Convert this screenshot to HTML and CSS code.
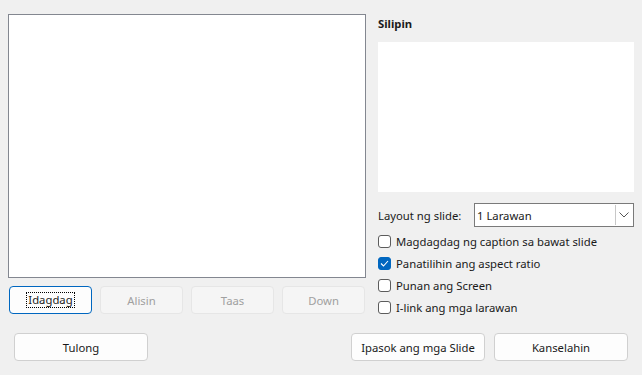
FILE: index.html
```html
<!DOCTYPE html>
<html>
<head>
<meta charset="utf-8">
<link rel="stylesheet" href="styles.css">
</head>
<body>
<div class="dialog">
  <div class="main">
    <div class="left">
      <div class="list"></div>
      <div class="list-buttons">
        <button class="btn default"><span class="focus">Idagdag</span></button>
        <button class="btn disabled">Alisin</button>
        <button class="btn disabled">Taas</button>
        <button class="btn disabled">Down</button>
      </div>
    </div>
    <div class="right">
      <div class="heading">Silipin</div>
      <div class="preview"></div>
      <div class="layout-row">
        <span class="label">Layout ng slide:</span>
        <div class="combo">
          <span class="combo-text">1 Larawan</span>
          <span class="combo-btn"><svg width="10" height="6" viewBox="0 0 10 6"><path d="M0.5 0.5 L5 5 L9.5 0.5" fill="none" stroke="#555" stroke-width="1"/></svg></span>
        </div>
      </div>
      <div class="checks">
        <label class="check"><span class="box"></span>Magdagdag ng caption sa bawat slide</label>
        <label class="check"><span class="box checked"><svg width="9" height="7" viewBox="0 0 9 7"><path d="M1 3.5 L3.5 6 L8 1" fill="none" stroke="#fff" stroke-width="1.1"/></svg></span>Panatilihin ang aspect ratio</label>
        <label class="check"><span class="box"></span>Punan ang Screen</label>
        <label class="check"><span class="box"></span>I-link ang mga larawan</label>
      </div>
    </div>
  </div>
  <div class="footer">
    <button class="btn wide">Tulong</button>
    <div class="footer-right">
      <button class="btn wide">Ipasok ang mga Slide</button>
      <button class="btn wide">Kanselahin</button>
    </div>
  </div>
</div>
</body>
</html>
```

FILE: styles.css
```css
html, body {
  margin: 0;
  padding: 0;
  background: #f0f0f0;
  width: 642px;
  height: 375px;
  overflow: hidden;
  font-family: "Noto Sans", "Open Sans", sans-serif;
  font-size: 11.3px;
  color: #1a1a1a;
}
.dialog {
  padding: 14px 8px 0 8px;
}
.main {
  display: flex;
  gap: 12px;
}
.left {
  width: 358px;
  display: flex;
  flex-direction: column;
}
.list {
  height: 262px;
  background: #fff;
  border: 1px solid #838790;
}
.list-buttons {
  display: flex;
  gap: 8px;
  margin-top: 8px;
  padding-left: 1px;
}
.btn {
  font-family: inherit;
  font-size: 11.3px;
  height: 28px;
  width: 83px;
  border: 1px solid #d0d0d0;
  border-radius: 4px;
  background: #fdfdfd;
  color: #1a1a1a;
  padding: 0;
  display: flex;
  align-items: center;
  justify-content: center;
  white-space: nowrap;
}
.btn.default {
  border-color: #0067c0;
}
.focus {
  outline: 1px dotted #000;
  padding: 0 1px;
  line-height: 14px;
}
.btn.disabled {
  background: #f5f5f5;
  border-color: #e6e6e6;
  color: #a0a0a0;
}
.right {
  width: 256px;
  display: flex;
  flex-direction: column;
}
.heading {
  font-weight: bold;
  height: 28px;
  line-height: 20px;
}
.preview {
  height: 150px;
  background: #fff;
}
.layout-row {
  display: flex;
  align-items: center;
  margin-top: 11px;
  gap: 8px;
}
.label {
  width: 88px;
  white-space: nowrap;
}
.combo {
  flex: 1;
  height: 22px;
  background: #fff;
  border: 1px solid #7a7a7a;
  display: flex;
  align-items: center;
}
.combo-text {
  flex: 1;
  padding-left: 2px;
}
.combo-btn {
  width: 16px;
  height: 20px;
  border-left: 1px solid #c8c8c8;
  display: flex;
  align-items: center;
  justify-content: center;
  margin-right: 1px;
}
.checks {
  display: flex;
  flex-direction: column;
  margin-top: 3px;
}
.check {
  display: flex;
  align-items: center;
  height: 22px;
  gap: 5px;
  white-space: nowrap;
}
.box {
  width: 11px;
  height: 11px;
  border: 1px solid #5c5c5c;
  border-radius: 3px;
  background: #fff;
  display: flex;
  align-items: center;
  justify-content: center;
}
.box.checked {
  background: #0067c0;
  border-color: #0067c0;
}
.footer {
  display: flex;
  justify-content: space-between;
  margin-top: 15px;
  padding: 0 6px 0 6px;
}
.footer-right {
  display: flex;
  gap: 9px;
}
.btn.wide {
  width: 134px;
  height: 28px;
}
```
